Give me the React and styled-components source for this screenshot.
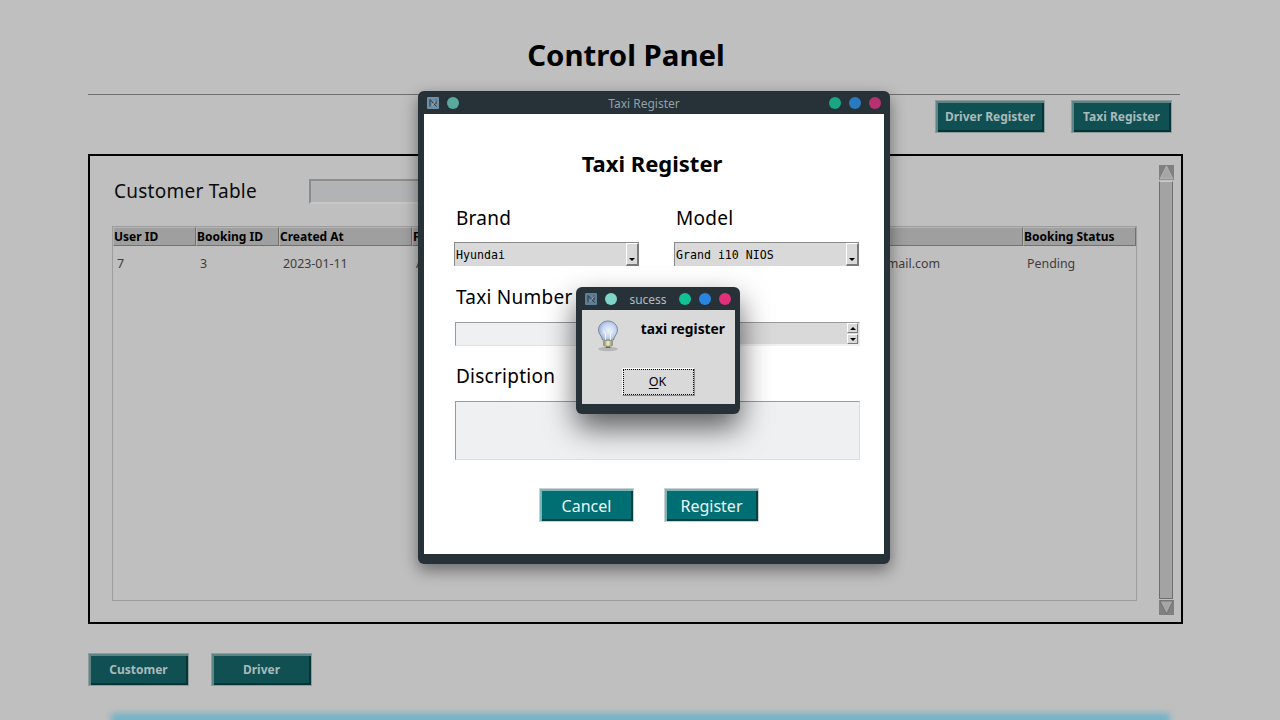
import React from "react";
import styled, { createGlobalStyle } from "styled-components";

const GlobalStyle = createGlobalStyle`
  html, body {
    margin: 0;
    height: 100%;
    overflow: hidden;
    background: #bfbfbf;
    font-family: "Noto Sans", "Open Sans", sans-serif;
  }
  * { box-sizing: border-box; }
`;

const Page = styled.div`
  position: relative;
  width: 1280px;
  height: 720px;
  overflow: hidden;
  padding-left: 88px;
`;

const Main = styled.div`
  width: 1095px;
`;

const Header = styled.header`
  width: 1092px;
  height: 95px;
  border-bottom: 1px solid #707070;
`;

const Title = styled.h1`
  margin: 0;
  padding: 36px 16px 0 0;
  font-size: 29.4px;
  line-height: 39px;
  font-weight: 700;
  color: #000;
  text-align: center;
`;

const Toolbar = styled.div`
  display: flex;
  justify-content: flex-end;
  gap: 26px;
  padding: 5px 11px 0 0;
`;

const DimButton = styled.button`
  width: ${(p) => p.$width}px;
  height: 33px;
  padding: 0;
  border: 0;
  background: #115052;
  color: #a9baba;
  font: 700 12px "Noto Sans", sans-serif;
  box-shadow: inset 0 0 0 1px #8e9c9c, inset 2px 2px 0 1px #5d8585,
    inset -2px -2px 0 1px #063538;
`;

const Panel = styled.section`
  display: flex;
  gap: 22px;
  height: 470px;
  margin-top: 21px;
  padding: 9px 7px 7px 22px;
  border: 2px solid #000;
`;

const PanelContent = styled.div`
  flex: 1;
  min-width: 0;
`;

const SearchRow = styled.div`
  display: flex;
  align-items: center;
  height: 25px;
  margin-top: 14px;
  padding-left: 2px;
`;

const PanelHeading = styled.h2`
  width: 195px;
  margin: 0 0 1px;
  font-size: 19px;
  letter-spacing: 0.25px;
  font-weight: 400;
  color: #0b0b0b;
`;

const SearchInput = styled.input`
  width: 300px;
  height: 25px;
  border: 2px solid #8d8d8d;
  border-right-color: #c6c6c6;
  border-bottom-color: #c6c6c6;
  background: #b2b3b5;
`;

const Table = styled.div`
  height: 375px;
  margin-top: 22px;
  border: 1px solid #9d9d9d;
  overflow: hidden;
`;

const columns = "83px 83px 133px 445px 166px 113px";

const HeaderRow = styled.div`
  display: grid;
  grid-template-columns: ${columns};
`;

const HeaderCell = styled.div`
  height: 19px;
  overflow: hidden;
  background: #9f9f9f;
  border: 1px solid #717171;
  border-top-color: #b5b5b5;
  border-left-color: #b5b5b5;
  font-size: 12px;
  font-weight: 700;
  line-height: 17px;
  color: #000;
  white-space: nowrap;
`;

const DataRow = styled.div`
  display: grid;
  grid-template-columns: ${columns};
  padding-top: 9px;
`;

const DataCell = styled.div`
  padding-left: 4px;
  font-size: 12.4px;
  line-height: 18px;
  color: #3d3d3d;
  white-space: nowrap;
`;

const ScrollBar = styled.div`
  display: flex;
  flex-direction: column;
  width: 15px;
`;

const ScrollArrow = styled.div`
  display: flex;
  align-items: center;
  justify-content: center;
  height: 15px;
  background: #808080;
`;

const ScrollThumb = styled.div`
  flex: 1;
  margin: 1px 1px 1px 0;
  background: #a3a3a3;
  border: 1px solid #6e6e6e;
  border-top-color: #c9c9c9;
`;

const BottomNav = styled.nav`
  display: flex;
  gap: 22px;
  margin-top: 29px;
`;

const GlowBar = styled.div`
  height: 24px;
  margin: 27px 13px 0 23px;
  border-radius: 4px;
  background: #74b3c7;
  filter: blur(3px);
`;

const Window = styled.div`
  position: absolute;
  left: ${(p) => p.$left}px;
  top: ${(p) => p.$top}px;
  width: ${(p) => p.$width}px;
  height: ${(p) => p.$height}px;
  display: flex;
  flex-direction: column;
  border-radius: 6px;
  background: #263238;
  box-shadow: ${(p) => p.$shadow};
`;

const TitleBar = styled.div`
  display: flex;
  align-items: center;
  gap: 8px;
  height: 23px;
  flex: none;
  padding: 1px 9px 0;
`;

const WindowTitle = styled.div`
  flex: 1;
  font-size: 12px;
  text-align: center;
  white-space: nowrap;
  color: ${(p) => p.$color};
`;

const Dot = styled.span`
  width: 12px;
  height: 12px;
  flex: none;
  border-radius: 50%;
  background: ${(p) => p.$color};
`;

const AppIconBox = styled.svg`
  width: 12px;
  height: 12px;
  flex: none;
`;

const FormBody = styled.div`
  flex: none;
  height: 440px;
  margin: 0 6px;
  padding: 36px 0 0 30px;
  background: #fff;
`;

const FormTitle = styled.h2`
  margin: 0;
  padding-right: 34px;
  font-size: 22px;
  line-height: 27px;
  font-weight: 700;
  color: #000;
  text-align: center;
`;

const FormGrid = styled.div`
  display: grid;
  grid-template-columns: 185px 185px;
  column-gap: 35px;
  margin-top: 28px;
`;

const Field = styled.div`
  margin-bottom: ${(p) => p.$gap}px;
`;

const FieldLabel = styled.label`
  display: block;
  height: 26px;
  margin-bottom: ${(p) => p.$gap}px;
  padding-left: 2px;
  font-size: 19px;
  letter-spacing: 0.25px;
  line-height: 26px;
  color: #000;
  white-space: nowrap;
`;

const Combo = styled.div`
  display: flex;
  height: 24px;
  background: #d9d9d9;
  border-top: 1px solid #8b8b8b;
  border-left: 1px solid #8b8b8b;
`;

const ComboText = styled.span`
  flex: 1;
  padding-left: 1px;
  font: 11.6px/25px "DejaVu Sans Mono", monospace;
  color: #000;
`;

const ComboArrow = styled.span`
  display: flex;
  flex-direction: column;
  align-items: center;
  justify-content: flex-end;
  width: 13px;
  padding-bottom: 3px;
  background: #d9d9d9;
  border: 1px solid #7b7b7b;
  border-top-color: #fff;
  border-left-color: #fff;
  border-width: 1px 2px 2px 1px;
`;

const DownTriangle = styled.i`
  width: 0;
  height: 0;
  border-left: 3.5px solid transparent;
  border-right: 3.5px solid transparent;
  border-top: 3.5px solid #000;
`;

const UpTriangle = styled.i`
  width: 0;
  height: 0;
  border-left: 3.5px solid transparent;
  border-right: 3.5px solid transparent;
  border-bottom: 3.5px solid #000;
`;

const Entry = styled.input`
  display: block;
  width: 186px;
  height: 24px;
  margin-left: 1px;
  background: #eff0f2;
  border: 1px solid #e2e2e2;
  border-top: 1px solid #9a9a9a;
  border-left: 1px solid #9a9a9a;
`;

const Spin = styled.div`
  display: flex;
  justify-content: flex-end;
  width: 186px;
  height: 24px;
  padding: 0 1px 0 0;
  background: #d9d9d9;
  border-top: 1px solid #9a9a9a;
  border-bottom: 2px solid #f0f0f0;
  border-right: 1px solid #f0f0f0;
`;

const SpinButtons = styled.div`
  display: flex;
  flex-direction: column;
  gap: 1px;
  width: 11px;
`;

const SpinButton = styled.span`
  display: flex;
  align-items: center;
  justify-content: center;
  height: 10px;
  background: #d9d9d9;
  border: 1px solid #7b7b7b;
  border-top-color: #fff;
  border-left-color: #fff;
`;

const NoteArea = styled.textarea`
  display: block;
  width: 405px;
  height: 59px;
  margin: 0 0 0 1px;
  resize: none;
  background: #eff0f2;
  border: 1px solid #dedede;
  border-top: 1px solid #9a9a9a;
  border-left: 1px solid #9a9a9a;
`;

const FormActions = styled.div`
  display: flex;
  justify-content: center;
  gap: 30px;
  width: 390px;
  margin-top: 28px;
`;

const ActionButton = styled.button`
  width: 95px;
  height: 34px;
  padding: 2px 0 0;
  border: 0;
  background: #006f73;
  color: #e9f6f6;
  font: 400 16px/30px "Noto Sans", sans-serif;
  box-shadow: inset 0 0 0 1px #c8d2d2, inset 2px 2px 0 1px #7fb3b5,
    inset -2px -2px 0 1px #003f42;
`;

const DialogBody = styled.div`
  flex: none;
  height: 94px;
  margin: 0 5px 0 6px;
  padding: 9px 10px 8px 15px;
  background: #d9d9d9;
`;

const DialogMessage = styled.div`
  display: flex;
  justify-content: space-between;
  height: 49px;
`;

const DialogText = styled.div`
  font-size: 13.8px;
  font-weight: 700;
  line-height: 19px;
  color: #000;
`;

const BulbIcon = styled.svg`
  width: 22px;
  height: 32px;
  flex: none;
  margin-top: 1px;
`;

const OkButton = styled.button`
  display: block;
  width: 73px;
  height: 28px;
  margin: 0 0 0 25px;
  padding: 0 2px 0 0;
  background: #d9d9d9;
  border: 1px solid #8c8c8c;
  border-top-color: #fff;
  border-left-color: #fff;
  outline: 1px dotted #000;
  outline-offset: -2px;
  font: 400 12.5px/24px "Noto Sans", sans-serif;
  color: #000;

  u {
    text-underline-offset: 2px;
  }
`;

const AppIcon = ({ bg, line }) => (
  <AppIconBox viewBox="0 0 12 12">
    <rect width="12" height="12" rx="1" fill={bg} />
    <path d="M3 2.500V9.500M3 2.500L9.500 9.500M9 2.500V7" fill="none" stroke={line} strokeWidth="1" />
    <path d="M5 8.500L9.500 3" fill="none" stroke="#d8c7b0" strokeWidth="0.5" />
  </AppIconBox>
);

const Bulb = () => (
  <BulbIcon viewBox="0 0 22 32">
    <defs>
      <radialGradient id="glass" cx="0.55" cy="0.5" r="0.62">
        <stop offset="0" stopColor="#eef2fa" />
        <stop offset="0.55" stopColor="#c6d6f0" />
        <stop offset="1" stopColor="#86a3d3" />
      </radialGradient>
      <linearGradient id="base" x1="0" y1="0" x2="1" y2="0">
        <stop offset="0" stopColor="#8b8b68" />
        <stop offset="0.5" stopColor="#f2f0c8" />
        <stop offset="1" stopColor="#8d8d6a" />
      </linearGradient>
    </defs>
    <ellipse cx="11" cy="29" rx="10" ry="2.200" fill="#000" opacity="0.16" />
    <path
      d="M11 1C5.500 1 1.500 5 1.500 10c0 4 3 5.500 4 10h11c1-4.500 4-6 4-10 0-5-4-9-9.500-9z"
      fill="url(#glass)"
      stroke="#7f8a99"
      strokeWidth="1"
    />
    <path d="M8.500 20V14L6.500 10.500M13.500 20V14L15.500 10.500" fill="none" stroke="#fff" strokeWidth="0.8" />
    <rect x="6.500" y="20.500" width="9" height="5.500" rx="1" fill="url(#base)" stroke="#7a7a58" strokeWidth="0.5" />
    <rect x="8.500" y="26.500" width="5" height="1.500" rx="0.700" fill="#66664c" />
  </BulbIcon>
);

const tableHead = ["User ID", "Booking ID", "Created At", "F", "", "Booking Status"];
const tableRow = ["7", "3", "2023-01-11", "A", "a@gmail.com", "Pending"];

export default function App() {
  return (
    <Page>
      <GlobalStyle />
      <Main>
        <Header>
          <Title>Control Panel</Title>
        </Header>
        <Toolbar>
          <DimButton $width={110}>Driver Register</DimButton>
          <DimButton $width={101}>Taxi Register</DimButton>
        </Toolbar>
        <Panel>
          <PanelContent>
            <SearchRow>
              <PanelHeading>Customer Table</PanelHeading>
              <SearchInput readOnly />
            </SearchRow>
            <Table>
              <HeaderRow>
                {tableHead.map((h, i) => (
                  <HeaderCell key={i}>{h}</HeaderCell>
                ))}
              </HeaderRow>
              <DataRow>
                {tableRow.map((c, i) => (
                  <DataCell key={i}>{c}</DataCell>
                ))}
              </DataRow>
            </Table>
          </PanelContent>
          <ScrollBar>
            <ScrollArrow>
              <svg width="15" height="15" viewBox="0 0 15 15">
                <path d="M7.500 1L14 14H1z" fill="#a6a6a6" stroke="#c4c4c4" strokeWidth="0.6" />
              </svg>
            </ScrollArrow>
            <ScrollThumb />
            <ScrollArrow>
              <svg width="15" height="15" viewBox="0 0 15 15">
                <path d="M1 1H14L7.500 14z" fill="#a6a6a6" stroke="#5f5f5f" strokeWidth="0.6" />
              </svg>
            </ScrollArrow>
          </ScrollBar>
        </Panel>
        <BottomNav>
          <DimButton $width={101}>Customer</DimButton>
          <DimButton $width={101}>Driver</DimButton>
        </BottomNav>
        <GlowBar />
      </Main>

      <Window $left={418} $top={91} $width={472} $height={473} $shadow="0 6px 16px rgba(0,0,0,0.45)">
        <TitleBar>
          <AppIcon bg="#6d8fa8" line="#26323a" />
          <Dot $color="#5aa99e" />
          <WindowTitle $color="#93a0a6">Taxi Register</WindowTitle>
          <Dot $color="#1aa583" />
          <Dot $color="#2a7abf" />
          <Dot $color="#b8306f" />
        </TitleBar>
        <FormBody>
          <FormTitle>Taxi Register</FormTitle>
          <FormGrid>
            <Field $gap={18}>
              <FieldLabel $gap={11}>Brand</FieldLabel>
              <Combo>
                <ComboText>Hyundai</ComboText>
                <ComboArrow>
                  <DownTriangle />
                </ComboArrow>
              </Combo>
            </Field>
            <Field $gap={18}>
              <FieldLabel $gap={11}>Model</FieldLabel>
              <Combo>
                <ComboText>Grand i10 NIOS</ComboText>
                <ComboArrow>
                  <DownTriangle />
                </ComboArrow>
              </Combo>
            </Field>
            <Field $gap={17}>
              <FieldLabel $gap={12}>Taxi Number</FieldLabel>
              <Entry readOnly />
            </Field>
            <Field $gap={17}>
              <FieldLabel $gap={12} />
              <Spin>
                <SpinButtons>
                  <SpinButton>
                    <UpTriangle />
                  </SpinButton>
                  <SpinButton>
                    <DownTriangle />
                  </SpinButton>
                </SpinButtons>
              </Spin>
            </Field>
          </FormGrid>
          <FieldLabel $gap={12}>Discription</FieldLabel>
          <NoteArea readOnly />
          <FormActions>
            <ActionButton>Cancel</ActionButton>
            <ActionButton>Register</ActionButton>
          </FormActions>
        </FormBody>
      </Window>

      <Window $left={576} $top={287} $width={164} $height={127} $shadow="0 14px 30px rgba(0,0,0,0.62)">
        <TitleBar>
          <AppIcon bg="#5d7f99" line="#26323a" />
          <Dot $color="#7fd6c8" />
          <WindowTitle $color="#b4bcc2">sucess</WindowTitle>
          <Dot $color="#12c295" />
          <Dot $color="#2a85de" />
          <Dot $color="#e0307a" />
        </TitleBar>
        <DialogBody>
          <DialogMessage>
            <Bulb />
            <DialogText>taxi register</DialogText>
          </DialogMessage>
          <OkButton>
            <u>O</u>K
          </OkButton>
        </DialogBody>
      </Window>
    </Page>
  );
}
